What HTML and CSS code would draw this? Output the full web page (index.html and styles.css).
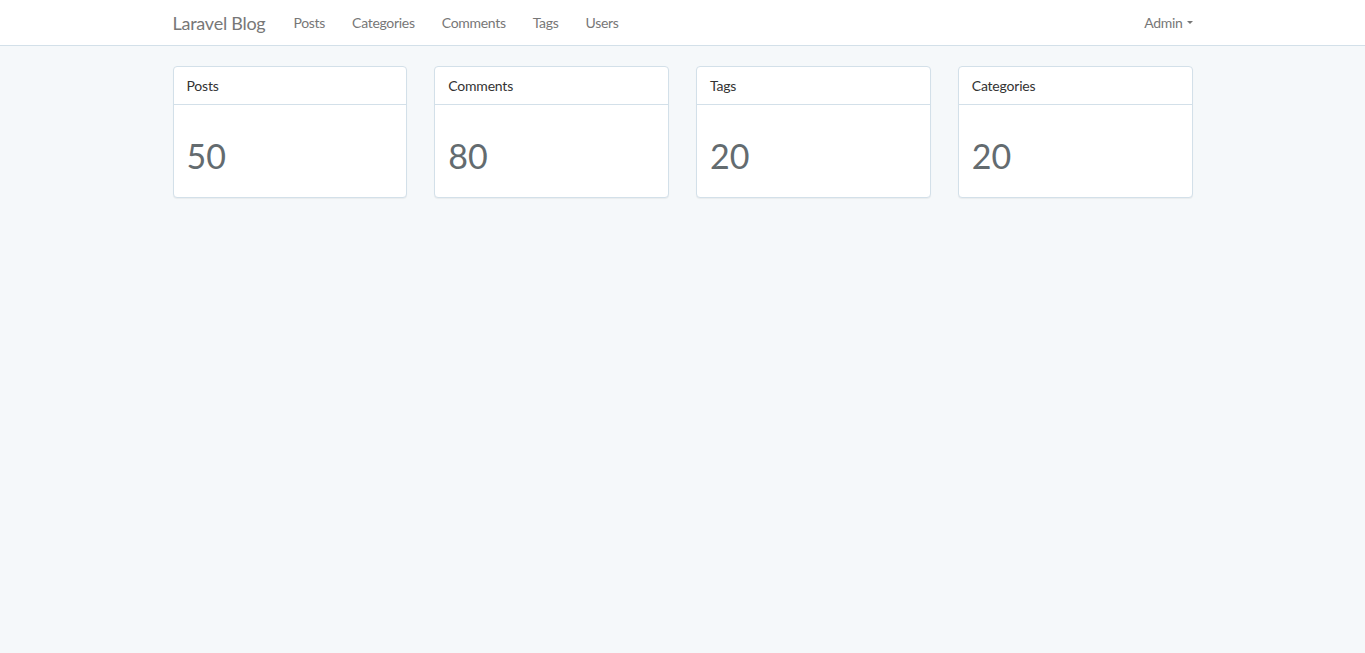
FILE: index.html
```html
<!DOCTYPE html>
<html lang="en">
<head>
<meta charset="utf-8">
<title>Laravel Blog</title>
<link rel="stylesheet" href="styles.css">
</head>
<body>
<nav class="navbar">
  <div class="container nav-inner">
    <a class="brand" href="#">Laravel Blog</a>
    <ul class="nav-links">
      <li><a href="#">Posts</a></li>
      <li><a href="#">Categories</a></li>
      <li><a href="#">Comments</a></li>
      <li><a href="#">Tags</a></li>
      <li><a href="#">Users</a></li>
    </ul>
    <a class="user" href="#">Admin <span class="caret"></span></a>
  </div>
</nav>
<main class="container">
  <div class="cards">
    <div class="card">
      <div class="card-head">Posts</div>
      <div class="card-body"><span class="count">50</span></div>
    </div>
    <div class="card">
      <div class="card-head">Comments</div>
      <div class="card-body"><span class="count">80</span></div>
    </div>
    <div class="card">
      <div class="card-head">Tags</div>
      <div class="card-body"><span class="count">20</span></div>
    </div>
    <div class="card">
      <div class="card-head">Categories</div>
      <div class="card-body"><span class="count">20</span></div>
    </div>
  </div>
</main>
</body>
</html>
```
FILE: styles.css
```css
* { box-sizing: border-box; }
html, body { margin: 0; padding: 0; }
body {
  background: #f5f8fa;
  font-family: Lato, "Open Sans", "Liberation Sans", sans-serif;
  font-size: 14px;
  color: #636b6f;
  min-height: 653px;
}
a { text-decoration: none; }
.container {
  width: 1020px;
  margin: 0 auto;
}
.navbar {
  background: #fff;
  border-bottom: 1px solid #d3e0e9;
  height: 46px;
}
.nav-inner {
  display: flex;
  align-items: center;
  height: 45px;
}
.brand {
  font-size: 18px;
  letter-spacing: -0.25px;
  color: #777;
  margin-right: 14.5px;
}
.nav-links {
  list-style: none;
  margin: 0;
  padding: 0;
  display: flex;
  flex: 1;
}
.nav-links a {
  display: block;
  color: #777;
  letter-spacing: -0.3px;
  padding: 0 13.5px;
}
.user {
  color: #777;
  letter-spacing: -0.3px;
  display: flex;
  align-items: center;
}
.caret {
  display: inline-block;
  width: 0;
  height: 0;
  margin-left: 4px;
  border-top: 3px solid #777;
  border-left: 3.5px solid transparent;
  border-right: 3.5px solid transparent;
}
.cards {
  display: grid;
  grid-template-columns: repeat(4, 1fr);
  column-gap: 27px;
  margin-top: 20px;
}
.card {
  background: #fff;
  border: 1px solid #d3e0e9;
  border-radius: 4px;
  box-shadow: 0 1px 1px rgba(0, 0, 0, 0.05);
}
.card-head {
  height: 38px;
  line-height: 37px;
  padding: 0 13px;
  border-bottom: 1px solid #d3e0e9;
  color: #333;
  letter-spacing: -0.2px;
}
.card-body {
  height: 92px;
  padding: 0 13px;
  display: flex;
  align-items: flex-end;
}
.count {
  font-size: 34px;
  line-height: 34px;
  font-weight: 400;
  margin-bottom: 24px;
  color: #636b6f;
}
```
